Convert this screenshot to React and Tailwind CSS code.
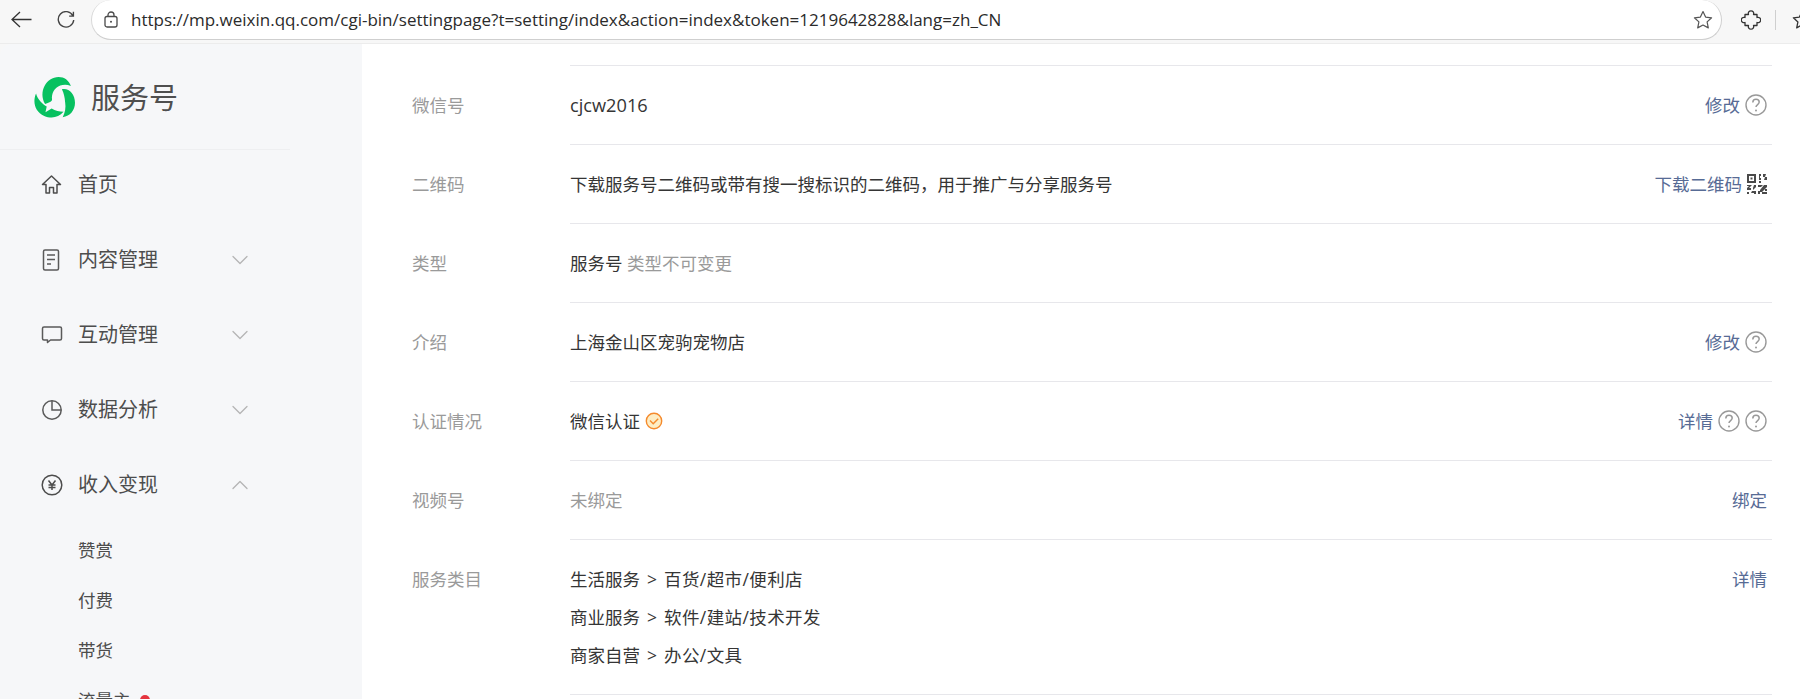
import React from 'react';
import { ChevronDown, ChevronUp } from 'lucide-react';

const HelpIcon = () => (
  <svg width="22" height="22" viewBox="0 0 22 22" fill="none" className="shrink-0">
    <circle cx="11" cy="11" r="10" stroke="#999" strokeWidth="1.400" />
    <path d="M7.800 8.400c0-2 1.400-3.200 3.200-3.200s3.200 1.200 3.200 2.900c0 2.500-3.200 2.500-3.200 5" stroke="#999" strokeWidth="1.500" />
    <circle cx="11" cy="16.500" r="1" fill="#999" />
  </svg>
);

const QrIcon = () => (
  <svg width="20" height="20" viewBox="0 0 20 20" fill="#4a4a4a" className="shrink-0">
    <path fillRule="evenodd" d="M0 0h9v9H0zM2 2v5h5V2z" />
    <rect x="3.500" y="3.500" width="2" height="2" />
    <path d="M12 0h2v2h-1v2h1v2h-2zM16 0h3l-1 3h2v3h-3l1-3h-2z" />
    <path d="M12 7h2v2h-2zM0 11h5l-3 3h2v2H0v-2l2-2H0zM7 11h2v2l-3 3v-2zM0 18h2v2H0zM5 17h4v3H7v-1H4zM11 11h5l-2 2h-3zM17 11h3v2l-5 5h-2v-2zM11 17h2v3h-2zM15 18h5v2h-5zM18 15h2v2h-2z" />
  </svg>
);

const VerifiedIcon = () => (
  <svg width="18" height="18" viewBox="0 0 18 18" fill="none" className="shrink-0">
    <circle cx="9" cy="9" r="7.700" fill="#fdedc4" stroke="#f58a2c" strokeWidth="1.400" />
    <path d="M5 8.600l3.200 3.100 5-5" stroke="#f58a2c" strokeWidth="1.400" />
  </svg>
);

const Logo = () => (
  <svg width="41" height="41" viewBox="0 0 100 100" fill="#07c160" className="shrink-0">
    <path d="M27 66C10 36 30 0 60 0c14 0 25 8 30 22-9-4-18-4-26-1-14 5-22 20-20 34 .6 5-8 7-17 11z" />
    <path d="M68 30c17-4 32 12 32 33 0 18-12 33-30 35 6-12 8-24 6-36-1-12-3-22-8-32z" />
    <path d="M5 40C-4 60 2 85 25 95c16 7 35 5 47-10-10 0-20-2-29-8l-15 9 3-14C20 65 9 55 5 40z" />
  </svg>
);

const HomeIcon = () => (
  <svg width="21" height="21" viewBox="0 0 21 21" fill="none" stroke="#4d4d4d" strokeWidth="1.500">
    <path d="M1.500 10.500L10.500 2l9 8.500h-3.500V19h-3.500v-5.500h-4V19H5v-8.500z" strokeLinejoin="round" />
  </svg>
);

const DocIcon = () => (
  <svg width="20" height="22" viewBox="0 0 20 22" fill="none" stroke="#5a5a5a" strokeWidth="1.500">
    <rect x="2.500" y="1" width="15" height="20" rx="1.500" />
    <path d="M6 6h8M6 10.500h8M6 15h4" />
  </svg>
);

const ChatIcon = () => (
  <svg width="22" height="20" viewBox="0 0 22 20" fill="none" stroke="#5a5a5a" strokeWidth="1.500">
    <path d="M3 2h16a1.500 1.500 0 0 1 1.500 1.500v10A1.500 1.500 0 0 1 19 15H9.500l-3 2.500V15H3a1.500 1.500 0 0 1-1.500-1.500v-10A1.500 1.500 0 0 1 3 2z" strokeLinejoin="round" />
  </svg>
);

const PieIcon = () => (
  <svg width="22" height="22" viewBox="0 0 22 22" fill="none" stroke="#5a5a5a" strokeWidth="1.500">
    <circle cx="11" cy="11" r="9.200" />
    <path d="M11 1.800V11h9.200" />
  </svg>
);

const YuanIcon = () => (
  <svg width="22" height="22" viewBox="0 0 22 22" fill="none" stroke="#4d4d4d">
    <circle cx="11" cy="11" r="9.800" strokeWidth="1.500" />
    <path d="M7.500 6.500L11 11l3.500-4.500M7.500 11h7M7.500 13.500h7M11 11v5" strokeWidth="1.500" />
  </svg>
);

const navItems = [
  { label: '首页', icon: <HomeIcon /> },
  { label: '内容管理', icon: <DocIcon />, chevron: 'down' },
  { label: '互动管理', icon: <ChatIcon />, chevron: 'down' },
  { label: '数据分析', icon: <PieIcon />, chevron: 'down' },
  { label: '收入变现', icon: <YuanIcon />, chevron: 'up' },
];

const subItems = ['赞赏', '付费', '带货'];

const Sidebar = () => (
  <aside className="w-[362px] shrink-0 rounded-tl-xl bg-[#f6f7f9] overflow-hidden">
    <div className="w-[290px] h-[106px] flex items-center gap-[16px] pl-[34px] pt-[2px] border-b border-[#eeeff1]">
      <Logo />
      <span className="text-[29px] text-[#4f4f4f]">服务号</span>
    </div>
    <nav className="w-[290px] -mt-[3px] flex flex-col">
      {navItems.map((item) => (
        <div key={item.label} className="h-[75px] flex items-center text-[20px] text-[#4d4d4d] pl-[41px] pr-[36px]">
          <span className="w-[37px] shrink-0 flex">{item.icon}</span>
          <span className="flex-1">{item.label}</span>
          {item.chevron === 'down' && <ChevronDown size={28} strokeWidth={1.100} color="#b5b5b5" />}
          {item.chevron === 'up' && <ChevronUp size={28} strokeWidth={1.100} color="#b5b5b5" />}
        </div>
      ))}
      <div className="flex flex-col pl-[78px] pt-[3px] text-[17.500px] text-[#4d4d4d]">
        {subItems.map((s) => (
          <div key={s} className="h-[50px] flex items-center">{s}</div>
        ))}
        <div className="h-[50px] flex items-center gap-[9px]">
          流量主
          <span className="w-[10px] h-[10px] rounded-full bg-[#e5343f]" />
        </div>
      </div>
    </nav>
  </aside>
);

const Link = ({ children }) => <span className="text-[#576b95]">{children}</span>;

const Row = ({ label, children, action }) => (
  <div className="flex">
    <div className="w-[158px] shrink-0 pt-[20px] leading-[38px] text-[#9a9a9a]">{label}</div>
    <div className="flex-1 flex justify-between border-b border-[#e7e7eb] pt-[20px] pb-[20px] pr-[5px] leading-[38px] text-[#353535]">
      <div>{children}</div>
      {action && <div className="h-[38px] flex items-center gap-[5px]">{action}</div>}
    </div>
  </div>
);

const Category = ({ parent, child }) => (
  <div>
    {parent}<span className="mx-[7px]">&gt;</span><span className="tracking-[0.400px]">{child}</span>
  </div>
);

const AddressBar = () => (
  <header className="h-[44px] shrink-0 flex items-start bg-[#f7f7f7] border-b border-[#ececec] overflow-hidden">
    <div className="w-[91px] h-[39px] shrink-0 flex items-center pl-[11px] gap-[25px]">
      <svg width="21" height="17" viewBox="0 0 21 17" fill="none" stroke="#333" strokeWidth="1.300">
        <path d="M20.500 8.500H1M9 1L1 8.500 9 16" />
      </svg>
      <svg width="18" height="18" viewBox="0 0 17 17" fill="none" stroke="#444" strokeWidth="1.300">
        <path d="M15 4.500A7.300 7.300 0 1 0 15.800 8.500M15.500 .8v4h-4" />
      </svg>
    </div>
    <div className="w-[1631px] h-[40px] shrink-0 flex items-center pl-[12px] pr-[8px] rounded-[20px] bg-white border border-t-0 border-[#cfcfcf] border-l-[#d8d8d8]">
      <svg width="14" height="17" viewBox="0 0 14 17" fill="none" stroke="#4a4a4a" strokeWidth="1.300" className="shrink-0">
        <rect x="1" y="5.500" width="12" height="10.500" rx="2" />
        <path d="M4 5.500V4a3 3 0 0 1 6 0v1.500" />
        <circle cx="7" cy="10.700" r="1" fill="#4a4a4a" stroke="none" />
      </svg>
      <span className="ml-[13px] flex-1 font-['Open_Sans','Noto_Sans',sans-serif] text-[17px] text-[#2b2b2b] whitespace-nowrap">
        https://mp.weixin.qq.com/cgi-bin/settingpage?t=setting/index&action=index&token=1219642828&lang=zh_CN
      </span>
      <svg width="20" height="20" viewBox="0 0 20 20" fill="none" stroke="#555" strokeWidth="1.200" className="shrink-0">
        <path d="M10 1.500l2.600 5.600 6 .7-4.500 4.100 1.200 6L10 15l-5.300 2.900 1.200-6L1.400 7.800l6-.7z" strokeLinejoin="round" />
      </svg>
    </div>
    <div className="h-[39px] flex items-center">
      <svg width="20" height="20" viewBox="0 0 20 20" fill="none" stroke="#333" strokeWidth="1.300" className="ml-[19px] shrink-0">
        <path d="M7.500 4.500a2.700 2.700 0 1 1 5 0h3.500v3a2.700 2.700 0 1 1 0 5v3h-3.500a2.700 2.700 0 1 1-5 0H4v-3a2.700 2.700 0 1 1 0-5v-3z" strokeLinejoin="round" />
      </svg>
      <div className="w-px h-[20px] bg-[#cfcfcf] ml-[14px]" />
      <svg width="20" height="20" viewBox="0 0 20 20" fill="none" stroke="#333" strokeWidth="1.300" className="ml-[16px] shrink-0">
        <path d="M10 1.500l2.600 5.600 6 .7-4.500 4.100 1.200 6L10 15l-5.300 2.900 1.200-6L1.400 7.800l6-.7z" strokeLinejoin="round" />
      </svg>
    </div>
  </header>
);

export default function App() {
  return (
    <div className="w-[1800px] h-[699px] flex flex-col overflow-hidden bg-[#f7f7f7] font-['Open_Sans','Noto_Sans_CJK_SC',sans-serif]">
      <AddressBar />
      <div className="flex-1 flex min-h-0">
        <Sidebar />
        <main className="flex-1 bg-white pl-[50px] pr-[28px] pt-[21px] text-[17.500px]">
          <div className="ml-[158px] border-t border-[#e7e7eb]" />
          <Row label="微信号" action={<><Link>修改</Link><HelpIcon /></>}>
            <span className="text-[18.200px]">cjcw2016</span>
          </Row>
          <Row label="二维码" action={<><Link>下载二维码</Link><QrIcon /></>}>
            下载服务号二维码或带有搜一搜标识的二维码，用于推广与分享服务号
          </Row>
          <Row label="类型">
            服务号 <span className="text-[#9a9a9a]">类型不可变更</span>
          </Row>
          <Row label="介绍" action={<><Link>修改</Link><HelpIcon /></>}>上海金山区宠驹宠物店</Row>
          <Row label="认证情况" action={<><Link>详情</Link><HelpIcon /><HelpIcon /></>}>
            <span className="flex items-center gap-[5px]">微信认证 <VerifiedIcon /></span>
          </Row>
          <Row label="视频号" action={<Link>绑定</Link>}>
            <span className="text-[#9a9a9a]">未绑定</span>
          </Row>
          <Row label="服务类目" action={<Link>详情</Link>}>
            <Category parent="生活服务" child="百货/超市/便利店" />
            <Category parent="商业服务" child="软件/建站/技术开发" />
            <Category parent="商家自营" child="办公/文具" />
          </Row>
        </main>
      </div>
    </div>
  );
}
